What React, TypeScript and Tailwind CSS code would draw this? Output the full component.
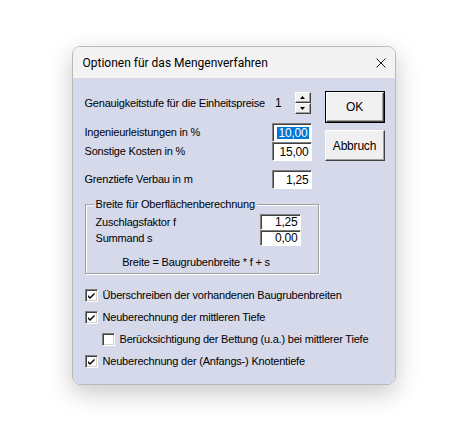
import React from 'react';

const sans = { fontFamily: '"Liberation Sans", Arial, sans-serif' };

const Field: React.FC<{ value: string; selected?: boolean; w?: string; h?: string }> = ({ value, selected, w = 'w-[40px]', h = 'h-[19px]' }) => (
  <div className={`${w} ${h} flex items-center justify-end bg-white border-t border-l border-t-[#808080] border-l-[#808080] border-b border-r border-b-white border-r-white shadow-[inset_1px_1px_0_#404040] pr-[2px] text-[12px] leading-none`}>
    <span className={selected ? 'bg-[#0078d7] text-white px-[1px]' : ''}>{value}</span>
  </div>
);

const SpinBtn: React.FC<{ up?: boolean }> = ({ up }) => (
  <div className="w-[16px] h-[11px] bg-[#f0f0f0] border-t border-l border-t-white border-l-white border-b border-r border-b-[#404040] border-r-[#404040] shadow-[inset_-1px_-1px_0_#a0a0a0] flex items-center justify-center">
    <svg width="5" height="3" viewBox="0 0 5 3">
      {up ? <path d="M2.5 0 L5 3 L0 3 Z" fill="#000" /> : <path d="M0 0 L5 0 L2.5 3 Z" fill="#000" />}
    </svg>
  </div>
);

const Check: React.FC<{ checked?: boolean }> = ({ checked }) => (
  <div className="w-[13px] h-[13px] shrink-0 bg-white border-t border-l border-t-[#808080] border-l-[#808080] border-b border-r border-b-white border-r-white shadow-[inset_1px_1px_0_#404040,inset_-1px_-1px_0_#d4d0c8] flex items-center justify-center">
    {checked && (
      <svg width="9" height="9" viewBox="0 0 9 9">
        <path d="M1 4 L3 6 L7.5 1.5 L7.5 3.5 L3 8 L1 6 Z" fill="#000" />
      </svg>
    )}
  </div>
);

const CheckRow: React.FC<{ checked?: boolean; label: string; indent?: boolean }> = ({ checked, label, indent }) => (
  <div className={`h-[22px] flex items-center gap-[5px] ${indent ? 'pl-[17px]' : ''}`}>
    <Check checked={checked} />
    <span>{label}</span>
  </div>
);

export default function App() {
  return (
    <div className="w-[467px] h-[436px] bg-white flex justify-center pt-[46px]">
      <div className="w-[324px] h-[339px] rounded-[8px] border border-[#b9b9b9] shadow-[0_8px_24px_rgba(0,0,0,0.22)] overflow-hidden flex flex-col">
        <div className="h-[31px] shrink-0 bg-[#f3f3f3] flex items-center justify-between pl-[10px] pr-[9px]">
          <span className="text-[12px] text-black" style={{ fontFamily: 'Roboto, "Liberation Sans", sans-serif' }}>
            Optionen für das Mengenverfahren
          </span>
          <svg width="10" height="10" viewBox="0 0 10 10">
            <path d="M0.5 0.5 L9.5 9.5 M9.5 0.5 L0.5 9.5" stroke="#1a1a1a" strokeWidth="1" />
          </svg>
        </div>
        <div className="flex-1 bg-[#d5d9ea] pl-[12px] text-[11px] tracking-[-0.2px] text-black leading-none" style={sans}>
          <div className="flex gap-[13px]">
            <div className="w-[227px] flex flex-col">
              <div className="mt-[14px] h-[22px] flex items-center">
                <span>Genauigkeitstufe für die Einheitspreise</span>
                <span className="ml-auto mr-[13px] text-[12px]">1</span>
                <div className="flex flex-col mr-[1px]">
                  <SpinBtn up />
                  <SpinBtn />
                </div>
              </div>
              <div className="mt-[9px] h-[19px] flex items-center justify-between">
                <span>Ingenieurleistungen in %</span>
                <Field value="10,00" selected />
              </div>
              <div className="h-[19px] flex items-center justify-between">
                <span>Sonstige Kosten in %</span>
                <Field value="15,00" />
              </div>
              <div className="mt-[9px] h-[19px] flex items-center justify-between">
                <span>Grenztiefe Verbau in m</span>
                <Field value="1,25" />
              </div>
            </div>
            <div className="flex flex-col mt-[13px] gap-[7px]">
              <div className="w-[60px] h-[32px] border border-black">
                <div className="w-full h-full bg-[#f0f0f0] border-t border-l border-t-white border-l-white border-b border-r border-b-[#404040] border-r-[#404040] shadow-[inset_-1px_-1px_0_#a0a0a0] flex items-center justify-center text-[12px]">
                  OK
                </div>
              </div>
              <div className="w-[60px] h-[31px] bg-[#f0f0f0] border-t border-l border-t-white border-l-white border-b border-r border-b-[#404040] border-r-[#404040] shadow-[inset_-1px_-1px_0_#a0a0a0] flex items-center justify-center text-[12px]">
                Abbruch
              </div>
            </div>
          </div>

          <div className="relative mt-[15px] w-[234px] h-[70px] border border-[#a0a0a0] shadow-[inset_1px_1px_0_#ffffff,1px_1px_0_#ffffff] pl-[10px] pr-[17px] pt-[9px]">
            <span className="absolute left-[8px] top-[-6px] bg-[#d5d9ea] px-[2px]">Breite für Oberflächenberechnung</span>
            <div className="h-[16px] flex items-center justify-between">
              <span>Zuschlagsfaktor f</span>
              <Field value="1,25" w="w-[41px]" h="h-[16px]" />
            </div>
            <div className="h-[16px] flex items-center justify-between">
              <span>Summand s</span>
              <Field value="0,00" w="w-[41px]" h="h-[16px]" />
            </div>
            <div className="mt-[11px] text-center pr-[4px]">Breite = Baugrubenbreite * f + s</div>
          </div>

          <div className="mt-[10px] flex flex-col">
            <CheckRow checked label="Überschreiben der vorhandenen Baugrubenbreiten" />
            <CheckRow checked label="Neuberechnung der mittleren Tiefe" />
            <CheckRow indent label="Berücksichtigung der Bettung (u.a.) bei mittlerer Tiefe" />
            <CheckRow checked label="Neuberechnung der (Anfangs-) Knotentiefe" />
          </div>
        </div>
      </div>
    </div>
  );
}
